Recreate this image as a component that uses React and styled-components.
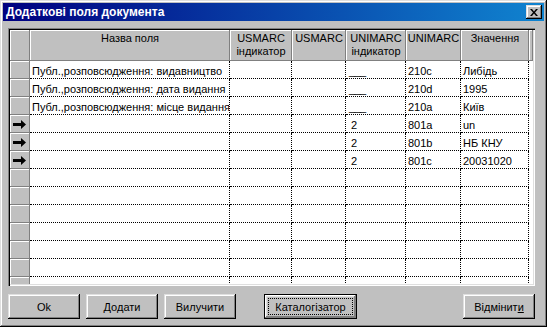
import React from 'react';
import styled, { createGlobalStyle } from 'styled-components';

const GlobalStyle = createGlobalStyle`
  html, body {
    margin: 0;
    padding: 0;
    background: #c0c0c0;
  }
  body {
    font-family: "Liberation Sans", Arial, sans-serif;
    font-size: 11px;
    color: #000;
  }
`;

const raised = `
  box-shadow: inset -1px -1px #000, inset 1px 1px #dfdfdf, inset -2px -2px #808080, inset 2px 2px #fff;
`;

const Window = styled.div`
  width: 547px;
  height: 327px;
  box-sizing: border-box;
  padding: 3px;
  background: #c0c0c0;
  display: flex;
  flex-direction: column;
  ${raised}
`;

const TitleBar = styled.div`
  height: 18px;
  flex: none;
  display: flex;
  align-items: center;
  justify-content: space-between;
  padding: 0 2px 0 3px;
  background: linear-gradient(90deg, #000080 0%, #1084d0 100%);
`;

const Title = styled.span`
  color: #fff;
  font-weight: bold;
  font-size: 12px;
  white-space: nowrap;
`;

const CloseButton = styled.div`
  width: 16px;
  height: 14px;
  box-sizing: border-box;
  background: #c0c0c0;
  display: flex;
  align-items: center;
  justify-content: center;
  ${raised}
`;

const Body = styled.div`
  flex: 1;
  display: flex;
  flex-direction: column;
  padding: 7px 9px 0 5px;
`;

const GridFrame = styled.div`
  height: 258px;
  box-sizing: border-box;
  padding: 2px;
  overflow: hidden;
  background: #c0c0c0;
  box-shadow: inset 1px 1px #808080, inset 2px 2px #000, inset -1px -1px #fff, inset -2px -2px #dfdfdf;
`;

const Grid = styled.div`
  height: 100%;
  overflow: hidden;
  background: #fff;
  display: grid;
  grid-template-columns: 20px 200px 62px 54px 60px 55px 68px 1fr;
  grid-template-rows: 31px;
  grid-auto-rows: 18px;
`;

const HeaderCell = styled.div`
  box-sizing: border-box;
  background: #c0c0c0;
  box-shadow: inset -1px -1px #808080, inset 1px 1px #fff;
  padding-top: 2px;
  line-height: 13px;
  text-align: center;
  white-space: pre;
  overflow: hidden;
`;

const Indicator = styled.div`
  box-sizing: border-box;
  background: #c0c0c0;
  box-shadow: inset -1px -1px #808080, inset 1px 1px #fff;
  display: flex;
  align-items: center;
  justify-content: center;
`;

const Cell = styled.div`
  box-sizing: border-box;
  border-right: ${(p) => (p.$filler ? 'none' : '1px dotted #000')};
  border-bottom: ${(p) => (p.$filler ? 'none' : '1px dotted #000')};
  padding: 2px 0 0 2px;
  line-height: 16px;
  white-space: pre;
  overflow: hidden;
`;

const Blank = styled.span`
  letter-spacing: -0.6px;
  margin-left: 1px;
`;

const ButtonRow = styled.div`
  display: flex;
  gap: 6px;
  margin-top: 8px;
`;

const Button = styled.div`
  width: ${(p) => p.$w || 72}px;
  height: 25px;
  box-sizing: border-box;
  background: #c0c0c0;
  display: flex;
  align-items: center;
  justify-content: center;
  margin-left: ${(p) => p.$ml || 0};
  ${(p) =>
    p.$default
      ? `border: 1px solid #000; box-shadow: inset -1px -1px #808080, inset 1px 1px #fff, inset -2px -2px #808080, inset 2px 2px #dfdfdf;`
      : raised}
`;

const FocusRing = styled.span`
  display: flex;
  align-items: center;
  justify-content: center;
  align-self: stretch;
  flex: 1;
  margin: 3px;
  border: 1px dotted #000;
`;

const Arrow = () => (
  <svg width="14" height="9" viewBox="0 0 14 9">
    <polygon points="0,3 8,3 8,0 13,4.5 8,9 8,6 0,6" fill="#000" />
  </svg>
);

const CloseIcon = () => (
  <svg width="8" height="7" viewBox="0 0 8 7">
    <path d="M0 0h2l2 2.5L6 0h2L5 3.5 8 7H6L4 4.5 2 7H0l3-3.5z" fill="#000" />
  </svg>
);

const rows = [
  { name: 'Публ.,розповсюдження: видавництво', ind: 'blank', code: '210c', value: 'Либідь' },
  { name: 'Публ.,розповсюдження: дата видання', ind: 'blank', code: '210d', value: '1995' },
  { name: 'Публ.,розповсюдження: місце видання', ind: 'blank', code: '210a', value: 'Київ' },
  { arrow: true, ind: ' 2', code: '801a', value: 'un' },
  { arrow: true, ind: ' 2', code: '801b', value: 'НБ КНУ' },
  { arrow: true, ind: ' 2', code: '801c', value: '20031020' },
  {}, {}, {}, {}, {}, {}, {},
];

const headers = [
  '',
  'Назва поля',
  'USMARC\nіндикатор',
  'USMARC',
  'UNIMARC\nіндикатор',
  'UNIMARC',
  'Значення',
  '',
];

export default function App() {
  return (
    <>
      <GlobalStyle />
      <Window>
        <TitleBar>
          <Title>Додаткові поля документа</Title>
          <CloseButton>
            <CloseIcon />
          </CloseButton>
        </TitleBar>
        <Body>
          <GridFrame>
            <Grid>
              {headers.map((h, i) => (
                <HeaderCell key={'h' + i}>{h}</HeaderCell>
              ))}
              {rows.map((r, i) => (
                <React.Fragment key={i}>
                  <Indicator>{r.arrow && <Arrow />}</Indicator>
                  <Cell>{r.name || ''}</Cell>
                  <Cell />
                  <Cell />
                  <Cell>{r.ind === 'blank' ? <Blank>___</Blank> : r.ind || ''}</Cell>
                  <Cell>{r.code || ''}</Cell>
                  <Cell>{r.value || ''}</Cell>
                  <Cell $filler />
                </React.Fragment>
              ))}
            </Grid>
          </GridFrame>
          <ButtonRow>
            <Button>Ok</Button>
            <Button>Додати</Button>
            <Button>Вилучити</Button>
            <Button $w={93} $ml="22px" $default>
              <FocusRing>Каталогізатор</FocusRing>
            </Button>
            <Button $ml="auto">
              Відмінит<u>и</u>
            </Button>
          </ButtonRow>
        </Body>
      </Window>
    </>
  );
}
